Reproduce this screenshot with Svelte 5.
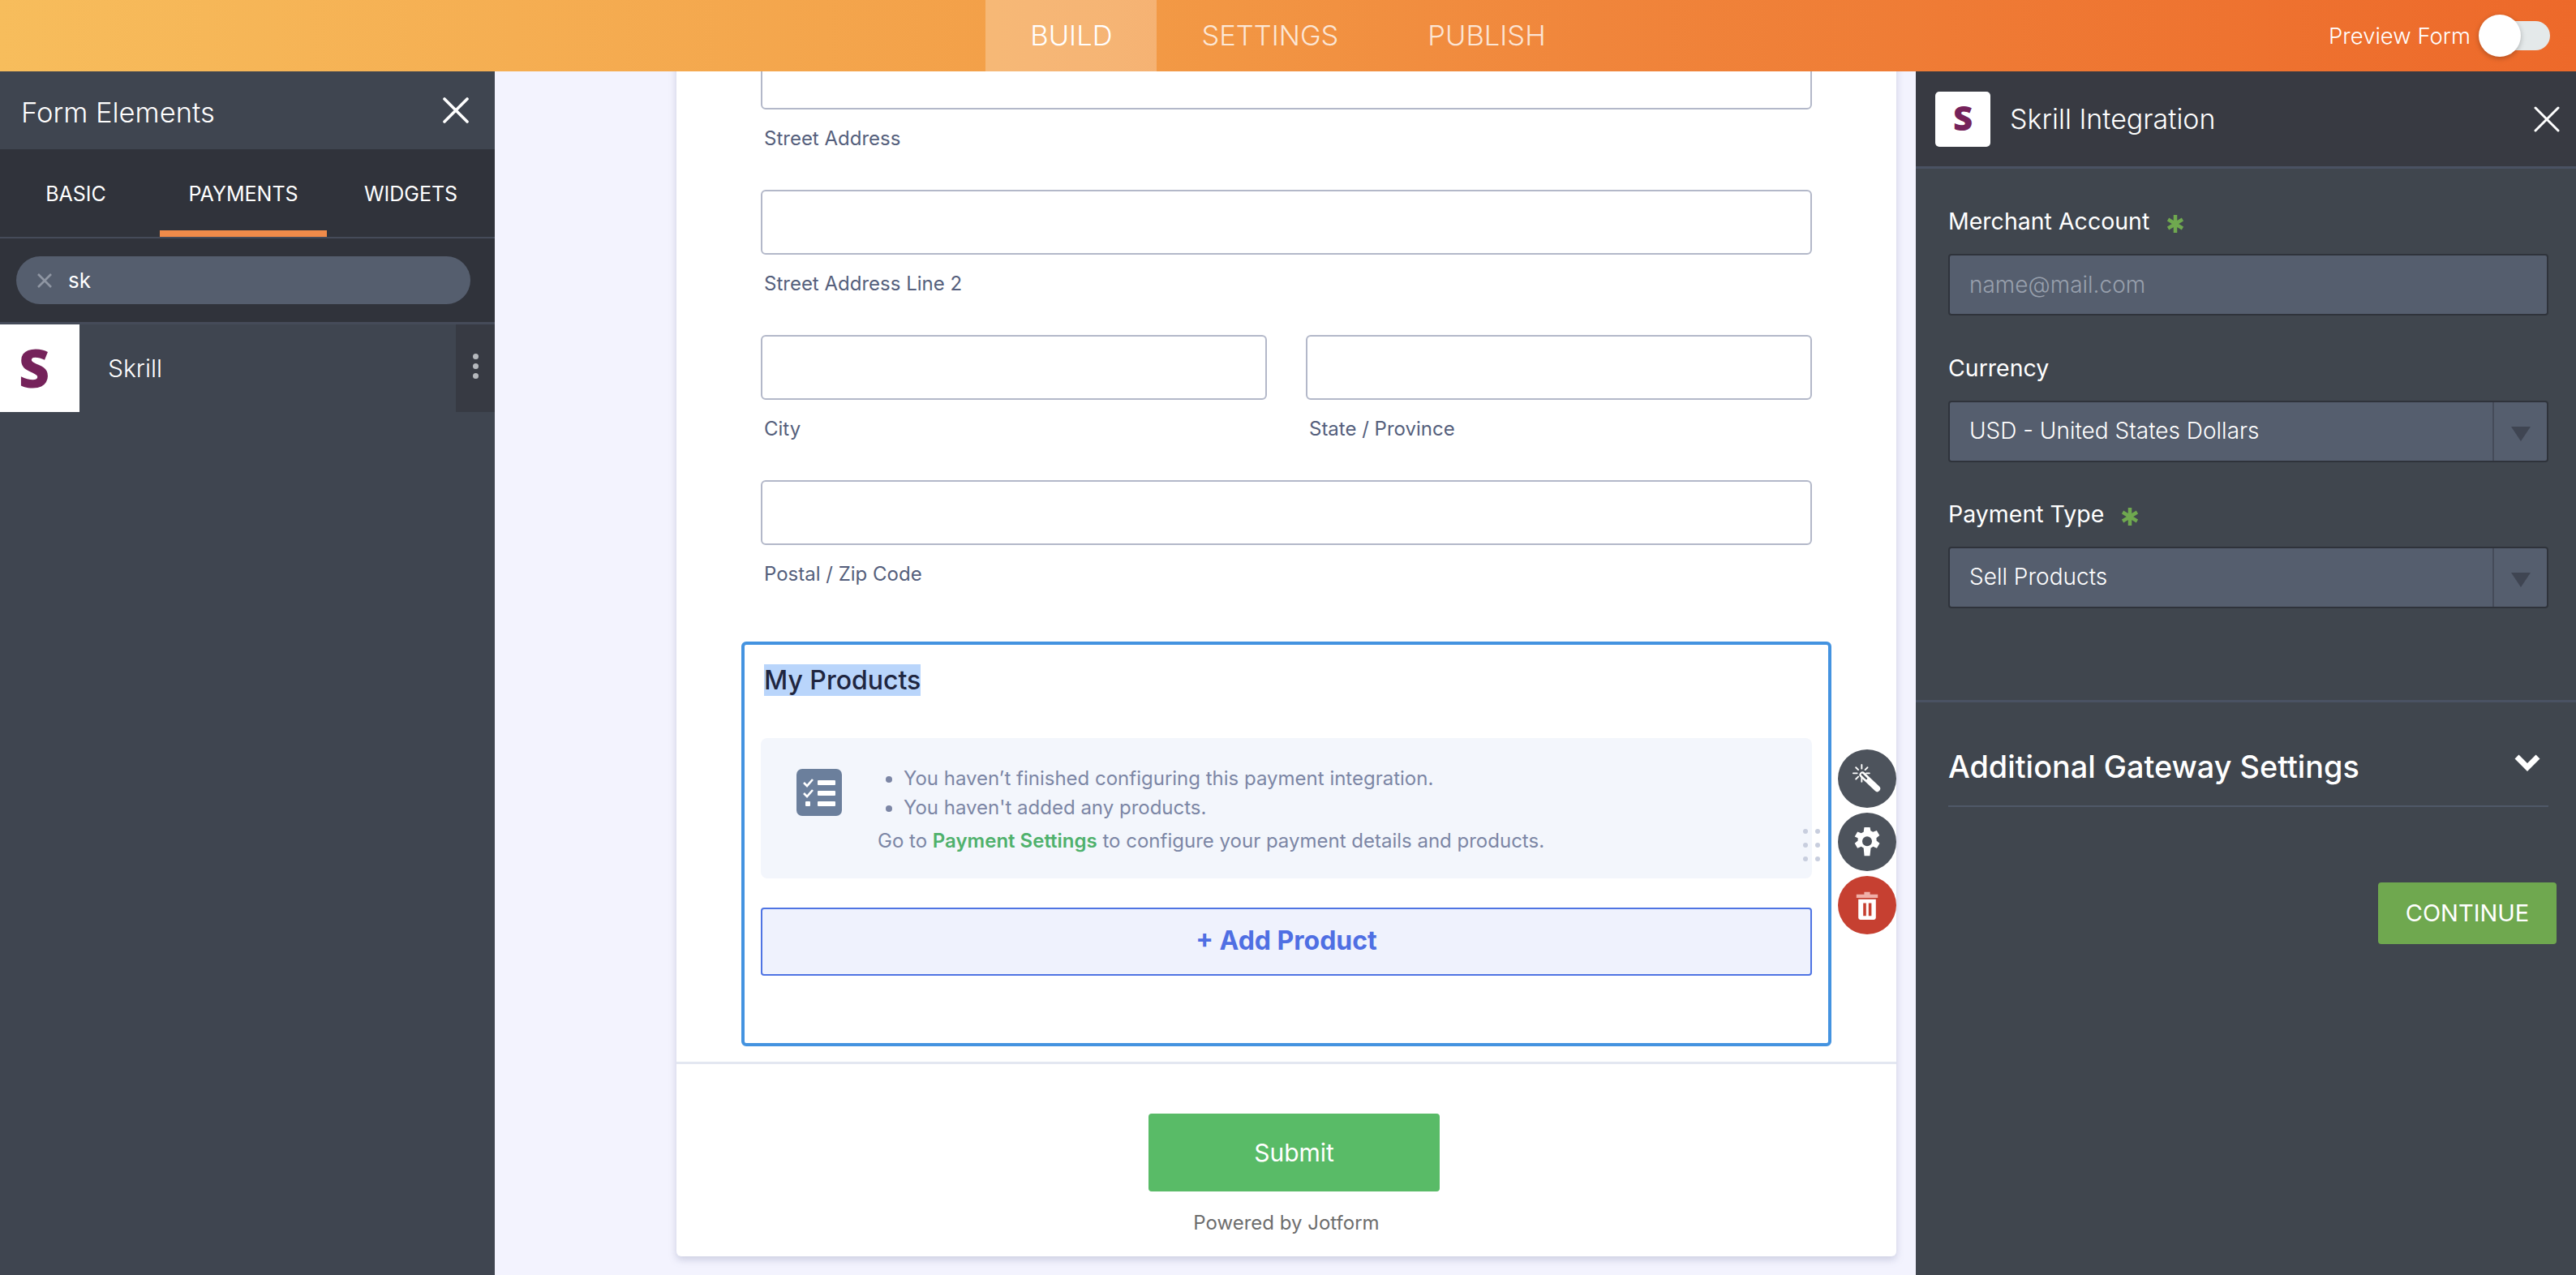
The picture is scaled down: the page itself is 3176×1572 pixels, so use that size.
<script>
  const tabs = ['BASIC', 'PAYMENTS', 'WIDGETS'];
  const nav = ['BUILD', 'SETTINGS', 'PUBLISH'];
  const dragDots = [0, 1, 2, 3, 4, 5];
</script>

{#snippet closeIcon(size, weight)}
  <svg width={size} height={size} viewBox="0 0 32 32" fill="none" stroke="currentColor" stroke-width={weight} stroke-linecap="round">
    <path d="M2 2 30 30M30 2 2 30" />
  </svg>
{/snippet}

{#snippet star()}
  <svg class="star" width="20" height="22" viewBox="0 0 20 22" fill="none" stroke="#6fa84f" stroke-width="4.5">
    <path d="M10 0v22M1 5.500 19 16.500M19 5.500 1 16.500" />
  </svg>
{/snippet}

{#snippet selectBox(text)}
  <div class="select">
    <span class="select-value">{text}</span>
    <span class="select-arrow"><i></i></span>
  </div>
{/snippet}

<div class="page">
  <header class="topbar">
    <div></div>
    <nav class="nav">
      {#each nav as item, i}
        <span class="nav-item" class:active={i === 0}>{item}</span>
      {/each}
    </nav>
    <div class="preview">
      <span>Preview Form</span>
      <span class="toggle"><i></i></span>
    </div>
  </header>

  <div class="workspace">
    <aside class="elements">
      <div class="elements-head">
        <span class="elements-title">Form Elements</span>
        {@render closeIcon(32, 3.6)}
      </div>
      <div class="tabs">
        {#each tabs as tab, i}
          <span class="tab" class:selected={i === 1}>{tab}</span>
        {/each}
      </div>
      <div class="search-wrap">
        <div class="search">
          <svg width="18" height="18" viewBox="0 0 18 18" fill="none" stroke="#8f96a3" stroke-width="2.6"><path d="M1 1 17 17M17 1 1 17" /></svg>
          <span>sk</span>
        </div>
      </div>
      <div class="element-row">
        <span class="logo-box"><span class="skrill-s">S</span></span>
        <span class="element-name">Skrill</span>
        <span class="element-more"><i></i><i></i><i></i></span>
      </div>
    </aside>

    <main class="canvas">
      <section class="card">
        <div class="fields">
          <div class="field">
            <div class="input"></div>
            <div class="field-label">Street Address</div>
          </div>
          <div class="field">
            <div class="input"></div>
            <div class="field-label">Street Address Line 2</div>
          </div>
          <div class="field-row">
            <div class="field">
              <div class="input"></div>
              <div class="field-label">City</div>
            </div>
            <div class="field">
              <div class="input"></div>
              <div class="field-label">State / Province</div>
            </div>
          </div>
          <div class="field">
            <div class="input"></div>
            <div class="field-label">Postal / Zip Code</div>
          </div>
        </div>

        <div class="products">
          <div class="products-title"><span>My Products</span></div>
          <div class="notice">
            <svg class="notice-icon" width="56" height="58" viewBox="0 0 56 58">
              <rect width="56" height="58" rx="7" fill="#6b7f9c" />
              <path d="M9 17l4 4 7-8M9 30l4 4 7-8" fill="none" stroke="#fff" stroke-width="2.6" />
              <rect x="26" y="14" width="22" height="6" rx="1" fill="#fff" />
              <rect x="26" y="27" width="22" height="6" rx="1" fill="#fff" />
              <rect x="26" y="40" width="22" height="6" rx="1" fill="#fff" />
              <rect x="11" y="40" width="6" height="6" rx="1" fill="#fff" />
            </svg>
            <div class="notice-text">
              <ul>
                <li>You haven’t finished configuring this payment integration.</li>
                <li>You haven't added any products.</li>
              </ul>
              <p>Go to <b>Payment Settings</b> to configure your payment details and products.</p>
            </div>
          </div>
          <div class="add-product">+ Add Product</div>

          <div class="drag-handle">
            {#each dragDots as d (d)}<i></i>{/each}
          </div>
          <div class="fabs">
            <span class="fab">
              <svg width="38" height="38" viewBox="0 0 40 40">
                <g stroke="#fff" stroke-width="2" stroke-linecap="round">
                  <path d="M13 2v5M13 19v5M2 13h5M19 13h4M5.500 5.500l3 3M5.500 20.500l3-3M20.500 5.500l-3 3" />
                </g>
                <path d="M14 15 33 33" stroke="#fff" stroke-width="8" stroke-linecap="round" />
                <path d="M13.500 14.500 19 20" stroke="#4d535c" stroke-width="2.6" stroke-linecap="round" />
              </svg>
            </span>
            <span class="fab">
              <svg width="36" height="36" viewBox="0 0 24 24" fill="#fff">
                <path fill-rule="evenodd" d="M9.700 0h4.600l.6 3.300c.7.300 1.300.6 1.900 1.100l3.100-1.200 2.300 4-2.600 2.100c.1.400.1.800.1 1.200v1l2.600 2.100-2.300 4-3.100-1.200c-.6.500-1.200.8-1.900 1.100L14.300 24H9.700l-.6-6.500c-.7-.3-1.300-.6-1.900-1.100l-3.100 1.200-2.300-4 2.600-2.100v-2.200L1.800 8.200l2.300-4 3.100 1.200c.6-.5 1.200-.8 1.900-1.100zM12 8a4 4 0 1 0 0 8 4 4 0 0 0 0-8z" transform="translate(0 -.5)" />
              </svg>
            </span>
            <span class="fab danger">
              <svg width="36" height="36" viewBox="0 0 22 30">
                <path d="M0 4h8V1.500h6V4h8v3.500H0z" fill="#f0b0a8" />
                <path d="M2 9h18v19a2 2 0 0 1-2 2H4a2 2 0 0 1-2-2zM7 13v13h3V13zM12.500 13v13h3V13z" fill="#fff" fill-rule="evenodd" />
              </svg>
            </span>
          </div>
        </div>

        <div class="card-footer">
          <div class="submit">Submit</div>
          <div class="powered">Powered by Jotform</div>
        </div>
      </section>
    </main>

    <aside class="settings">
      <div class="settings-head">
        <span class="head-logo"><span class="skrill-s small">S</span></span>
        <span class="head-title">Skrill Integration</span>
        {@render closeIcon(32, 3)}
      </div>
      <div class="settings-form">
        <label class="settings-label">Merchant Account {@render star()}</label>
        <div class="text-input">name@mail.com</div>
        <label class="settings-label">Currency</label>
        {@render selectBox('USD - United States Dollars')}
        <label class="settings-label">Payment Type {@render star()}</label>
        {@render selectBox('Sell Products')}
      </div>
      <div class="accordion">
        <div class="accordion-row">
          <span>Additional Gateway Settings</span>
          <svg width="32" height="22" viewBox="0 0 32 22" fill="none" stroke="#fff" stroke-width="7"><path d="M3 4 16 17 29 4" /></svg>
        </div>
      </div>
      <div class="continue-row">
        <div class="continue">CONTINUE</div>
      </div>
    </aside>
  </div>
</div>

<style>
  :global(body) {
    margin: 0;
    background: #f3f3fe;
  }

  .page {
    width: 3176px;
    height: 1572px;
    display: flex;
    flex-direction: column;
    overflow: hidden;
    font-family: Inter, "Liberation Sans", sans-serif;
  }

  .topbar {
    height: 88px;
    flex-shrink: 0;
    display: grid;
    grid-template-columns: 1fr auto 1fr;
    background: linear-gradient(90deg, #f7bd5c 0%, #f39f48 40%, #f0853b 62%, #ed692a 100%);
    color: #fff;
  }

  .nav {
    display: flex;
  }

  .nav-item {
    padding: 0 55px;
    line-height: 88px;
    font-size: 34.5px;
    font-weight: 300;
    color: rgba(255, 255, 255, 0.78);
  }

  .nav-item.active {
    background: rgba(255, 255, 255, 0.25);
    color: #fff;
  }

  .preview {
    display: flex;
    align-items: center;
    justify-content: flex-end;
    gap: 10px;
    padding-right: 32px;
    font-size: 27.5px;
    font-weight: 300;
  }

  .toggle {
    position: relative;
    width: 88px;
    height: 36px;
    background: linear-gradient(90deg, transparent 30px, #e4e9ea 30px);
    border-radius: 18px;
  }

  .toggle i {
    position: absolute;
    left: 0;
    top: -8px;
    width: 52px;
    height: 52px;
    background: #fff;
    border-radius: 50%;
    box-shadow: 0 2px 6px rgba(0, 0, 0, 0.25);
  }

  .workspace {
    flex: 1;
    display: flex;
    min-height: 0;
  }

  .elements {
    width: 610px;
    flex-shrink: 0;
    background: #3f4550;
    color: #fff;
  }

  .elements-head {
    height: 96px;
    display: flex;
    align-items: center;
    justify-content: space-between;
    padding: 0 32px 0 26px;
  }

  .elements-title {
    margin-top: 4px;
    font-size: 34.5px;
    font-weight: 300;
  }

  .tabs {
    display: grid;
    grid-template-columns: 197px 206px 207px;
    height: 108px;
    background: #30333b;
    border-bottom: 2px solid #454b59;
  }

  .tab {
    text-align: center;
    line-height: 110px;
    font-size: 25px;
    font-weight: 400;
  }

  .tab:first-child {
    padding-right: 10px;
  }

  .tab.selected {
    border-bottom: 8px solid #f08b4a;
    height: 100px;
  }

  .search-wrap {
    background: #30333b;
    height: 106px;
    padding: 22px 30px 0 20px;
    box-sizing: border-box;
    border-bottom: 3px solid #454b59;
  }

  .search {
    height: 59px;
    border-radius: 30px;
    background: #555e6e;
    display: flex;
    align-items: center;
    gap: 20px;
    padding-left: 26px;
    font-size: 26px;
  }

  .element-row {
    height: 108px;
    display: flex;
    align-items: center;
  }

  .logo-box {
    width: 98px;
    height: 108px;
    background: #fff;
    display: flex;
    justify-content: center;
    padding-right: 14px;
    box-sizing: border-box;
  }

  .skrill-s {
    font-family: "Open Sans", sans-serif;
    font-weight: 800;
    font-size: 66px;
    line-height: 104px;
    color: #75225a;
  }

  .skrill-s.small {
    font-size: 42px;
    line-height: 64px;
  }

  .element-name {
    flex: 1;
    padding-left: 35px;
    font-size: 30px;
    font-weight: 300;
  }

  .element-more {
    width: 48px;
    height: 108px;
    background: #373a43;
    display: flex;
    flex-direction: column;
    align-items: center;
    justify-content: center;
    gap: 5px;
    padding-bottom: 6px;
    box-sizing: border-box;
  }

  .element-more i {
    width: 7px;
    height: 7px;
    border-radius: 50%;
    background: #b5b8bd;
  }

  .canvas {
    flex: 1;
    display: flex;
    flex-direction: column;
    justify-content: flex-end;
    align-items: flex-start;
    padding: 0 0 23px 224px;
    overflow: hidden;
    background: #f3f3fe;
  }

  .card {
    width: 1504px;
    flex-shrink: 0;
    background: #fff;
    border-radius: 0 0 6px 6px;
    box-shadow: 0 4px 10px rgba(130, 135, 170, 0.35);
  }

  .fields {
    padding: 0 104px;
  }

  .input {
    height: 76px;
    border: 2px solid #b3b8c9;
    border-radius: 6px;
    background: #fff;
  }

  .field-label {
    padding: 20px 4px 47px;
    font-size: 24px;
    line-height: 32px;
    color: #555f7c;
  }

  .field-row {
    display: grid;
    grid-template-columns: 1fr 1fr;
    gap: 48px;
  }

  .products {
    position: relative;
    margin: 20px 80px 0;
    padding: 24px 20px 83px;
    border: 4px solid #4493e0;
    border-radius: 6px;
  }

  .products-title {
    margin: 0 4px 52px;
    font-size: 32px;
    line-height: 39px;
    font-weight: 500;
    color: #1f2640;
  }

  .products-title span {
    background: #b9d5fb;
    display: inline-block;
  }

  .notice {
    height: 173px;
    box-sizing: border-box;
    display: flex;
    gap: 44px;
    padding: 32px 44px 0;
    background: #f3f6fc;
    border-radius: 8px;
    font-size: 24px;
    line-height: 36px;
    color: #7c86a5;
  }

  .notice-icon {
    margin-top: 6px;
    flex-shrink: 0;
  }

  .notice-text ul {
    margin: 0;
    padding: 0 0 0 32px;
  }

  .notice-text p {
    margin: 5px 0 0;
  }

  .notice-text b {
    color: #4fb16c;
    font-weight: 600;
  }

  .add-product {
    margin-top: 36px;
    height: 84px;
    box-sizing: border-box;
    border: 2px solid #4f74e3;
    border-radius: 4px;
    background: #eff2fd;
    color: #4f6fe3;
    font-size: 32px;
    font-weight: 700;
    line-height: 78px;
    text-align: center;
  }

  .drag-handle {
    position: absolute;
    right: 10px;
    top: 227px;
    display: grid;
    grid-template-columns: 6px 6px;
    gap: 11px 9px;
  }

  .drag-handle i {
    width: 6px;
    height: 6px;
    border-radius: 50%;
    background: #c8cede;
  }

  .fabs {
    position: absolute;
    left: 1348px;
    top: 129px;
    display: flex;
    flex-direction: column;
    gap: 6px;
  }

  .fab {
    width: 72px;
    height: 72px;
    border-radius: 50%;
    background: #4d535c;
    display: flex;
    align-items: center;
    justify-content: center;
  }

  .fab.danger {
    background: #c64031;
  }

  .card-footer {
    margin-top: 19px;
    border-top: 3px solid #e3e7f1;
    padding: 61px 0 25px;
    display: flex;
    flex-direction: column;
    align-items: center;
  }

  .submit {
    width: 359px;
    height: 96px;
    margin-left: 19px;
    background: #59bb67;
    border-radius: 4px;
    color: #fff;
    font-size: 30px;
    font-weight: 400;
    line-height: 96px;
    text-align: center;
  }

  .powered {
    margin-top: 23px;
    font-size: 24px;
    line-height: 32px;
    color: #6d6d6d;
  }

  .settings {
    position: relative;
    width: 814px;
    flex-shrink: 0;
    background: #40464e;
    color: #fff;
    margin-left: auto;
  }

  .settings-head {
    height: 120px;
    box-sizing: border-box;
    background: #383a42;
    border-bottom: 3px solid #4a5263;
    display: flex;
    align-items: center;
    padding: 0 20px 0 24px;
    color: #fff;
  }

  .head-logo {
    width: 68px;
    height: 68px;
    background: #fff;
    border-radius: 5px;
    display: flex;
    justify-content: center;
  }

  .head-title {
    flex: 1;
    padding-left: 24px;
    font-size: 34px;
    font-weight: 300;
  }

  .settings-form {
    padding: 47px 34px 113px 40px;
  }

  .settings-label {
    display: flex;
    align-items: center;
    gap: 22px;
    margin-bottom: 22px;
    font-size: 28.5px;
    line-height: 36px;
    font-weight: 400;
  }

  .star {
    margin-top: 6px;
  }

  .text-input,
  .select {
    box-sizing: border-box;
    background: #555e6e;
    border: 2px solid #2f333b;
    border-radius: 4px;
    font-size: 28px;
  }

  .text-input {
    height: 76px;
    line-height: 72px;
    padding-left: 24px;
    margin-bottom: 47px;
    color: #98a0ad;
    font-weight: 300;
  }

  .select {
    height: 76px;
    display: flex;
    margin-bottom: 46px;
  }

  .select:last-child {
    margin-bottom: 0;
  }

  .select-value {
    flex: 1;
    line-height: 70px;
    padding-left: 24px;
    font-weight: 300;
  }

  .select-arrow {
    width: 65px;
    border-left: 2px solid #454b59;
    display: flex;
    align-items: center;
    justify-content: center;
  }

  .select-arrow i {
    width: 0;
    height: 0;
    border-left: 12px solid transparent;
    border-right: 12px solid transparent;
    border-top: 18px solid #3f4552;
    margin-top: 6px;
  }

  .accordion {
    border-top: 3px solid #4a5263;
    padding: 55px 34px 0 40px;
  }

  .accordion-row {
    display: flex;
    align-items: flex-start;
    justify-content: space-between;
    padding: 0 10px 24px 0;
    border-bottom: 2px solid #4f5868;
    font-size: 37.8px;
    line-height: 48px;
    font-weight: 500;
  }

  .accordion-row svg {
    margin-top: 8px;
  }

  .continue-row {
    display: flex;
    justify-content: flex-end;
    padding: 93px 24px 0 0;
  }

  .continue {
    width: 220px;
    height: 76px;
    background: #6fa84f;
    border-radius: 4px;
    font-size: 29px;
    font-weight: 400;
    line-height: 76px;
    text-align: center;
  }
</style>
